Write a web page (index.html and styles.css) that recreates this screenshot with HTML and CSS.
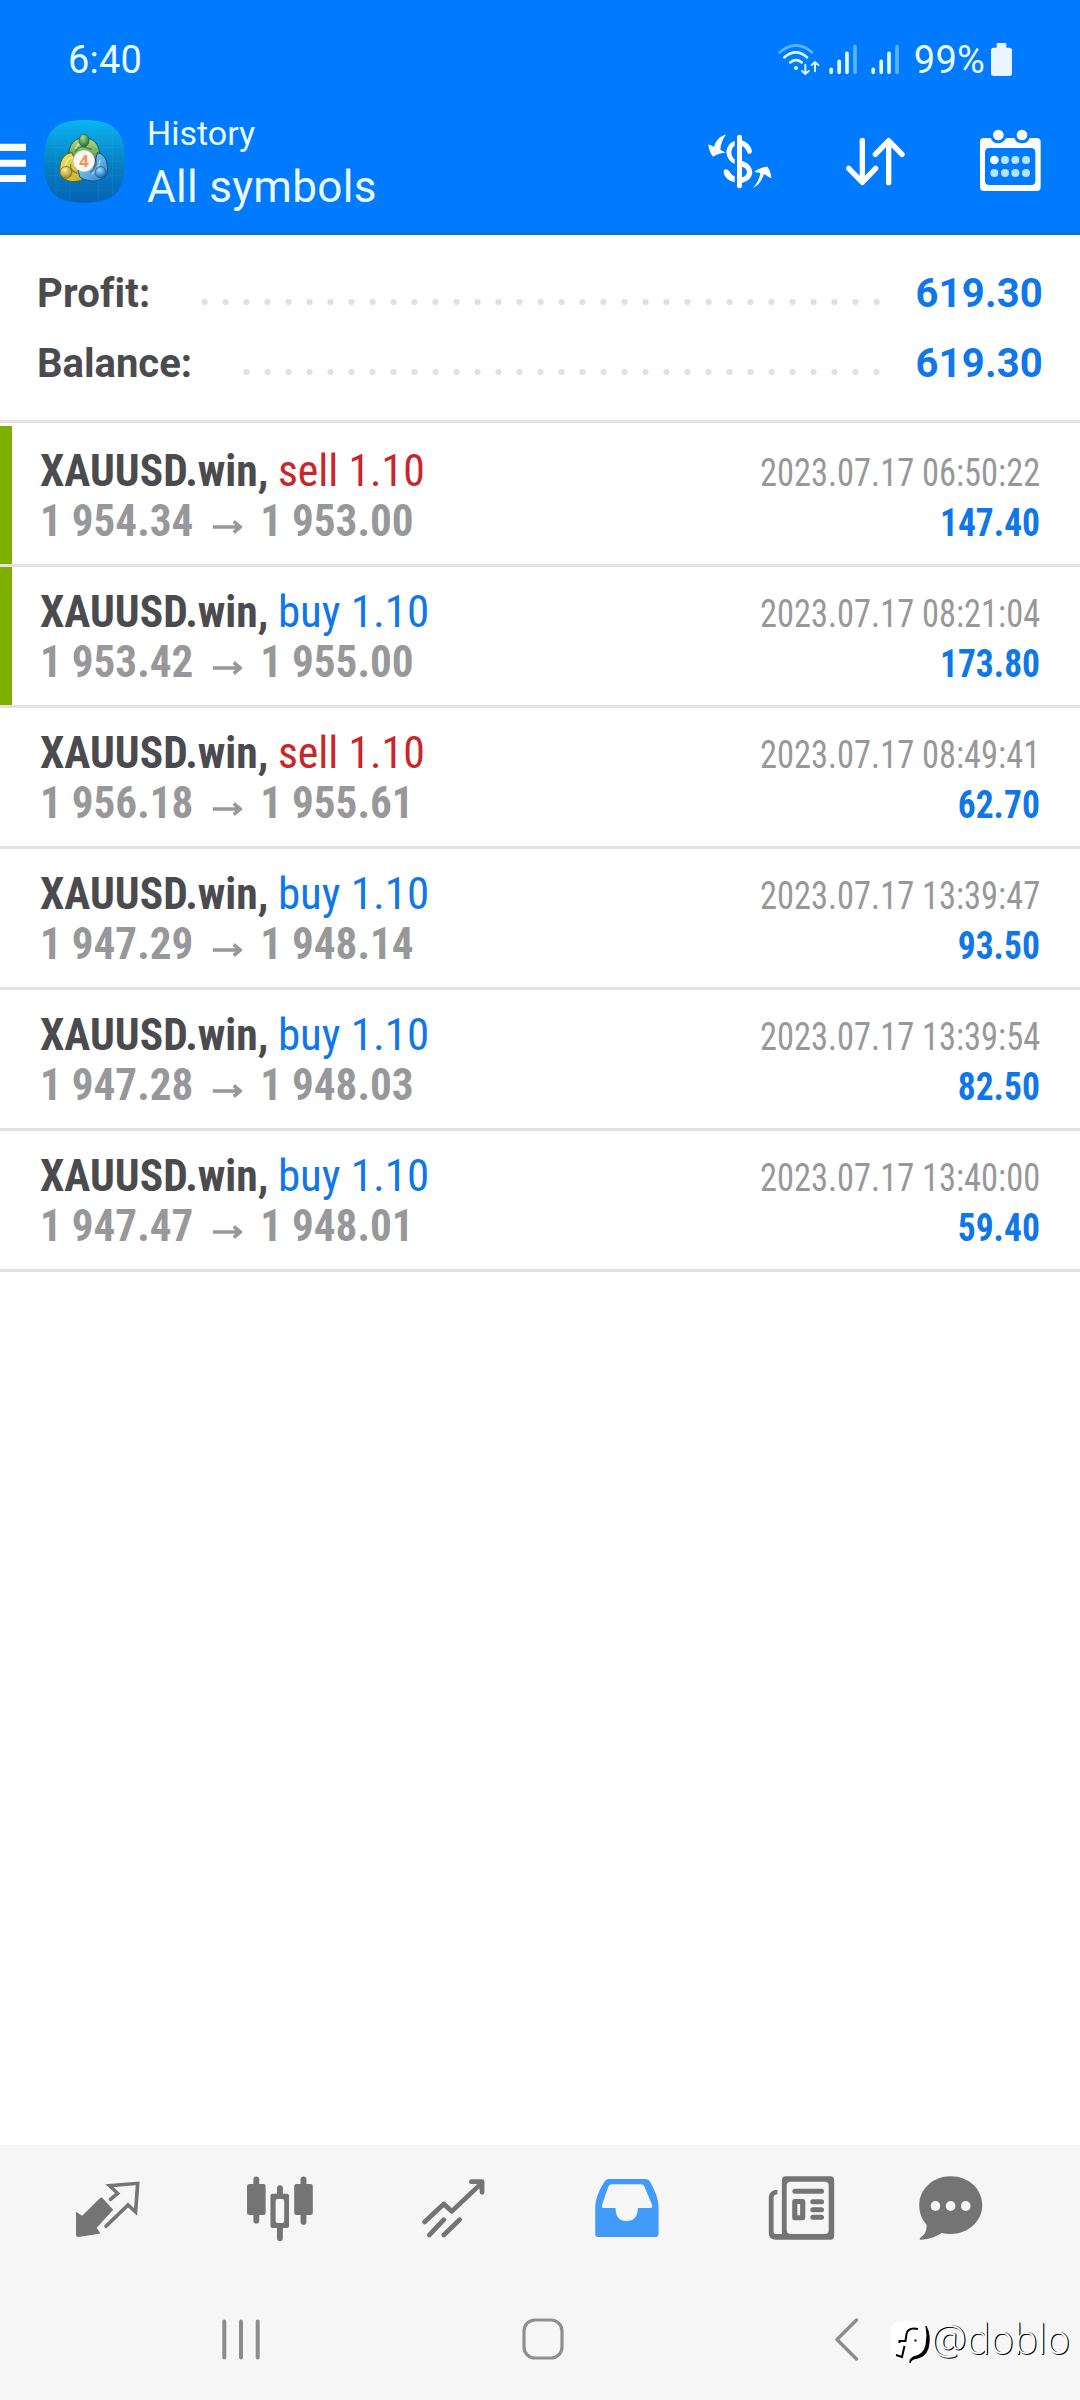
FILE: index.html
```html
<!DOCTYPE html>
<html lang="en">
<head>
<meta charset="utf-8">
<title>History</title>
<link rel="stylesheet" href="styles.css">
</head>
<body>
<div class="app">
  <header class="header">
    <div class="status">
      <span class="clock">6:40</span>
      <div class="indicators">
        <svg class="wifi" viewBox="348 126 132 105" fill="none" stroke="#d9f7ff" stroke-width="8" stroke-linecap="round">
          <path d="M356 157Q405 115 453 157" stroke="#5cb4ff"/>
          <path d="M370 172Q405 142 438 172"/>
          <path d="M388 187Q405 174 422 187"/>
          <circle cx="405" cy="204" r="6" fill="#d9f7ff" stroke="none"/>
          <path d="M433 194V222M423 213L433 222L443 213M462 214V186M452 195L462 186L472 195" stroke-width="6"/>
        </svg>
        <svg class="signal" viewBox="504 132 84 93" stroke="#e4fbff" stroke-width="11" stroke-linecap="round"><path d="M510.500 208V217M534.500 184V217M558 160V217"/><path d="M582 140V217" stroke="#5cb4ff"/></svg>
        <svg class="signal" viewBox="504 132 84 93" stroke="#e4fbff" stroke-width="11" stroke-linecap="round"><path d="M510.500 208V217M534.500 184V217M558 160V217"/><path d="M582 140V217" stroke="#5cb4ff"/></svg>
        <span class="percent">99%</span>
        <svg class="battery" viewBox="993 129 63 99" fill="#ebf5ff"><path d="M1012 129H1036Q1039 129 1039 132V143H1048Q1056 143 1056 151V220Q1056 228 1048 228H1001Q993 228 993 220V151Q993 143 1001 143H1010V132Q1010 129 1012 129Z"/></svg>
      </div>
    </div>
    <div class="toolbar">
      <svg class="menu" viewBox="0 429 78 120" fill="#fff"><path d="M0 431H78V453H0ZM0 479H78V500H0ZM0 525H78V546H0Z"/></svg>
      <svg class="logo" viewBox="132 360 243 249">
        <defs>
          <linearGradient id="tile" x1="0" y1="0" x2="0" y2="1"><stop offset="0" stop-color="#0bb4f4"/><stop offset=".5" stop-color="#0784c4"/><stop offset="1" stop-color="#0560b4"/></linearGradient>
          <linearGradient id="green" x1="0" y1="0" x2="0" y2="1"><stop offset="0" stop-color="#b4db8a"/><stop offset="1" stop-color="#3d8a3a"/></linearGradient>
          <linearGradient id="yellow" x1="0" y1="0" x2="1" y2="1"><stop offset="0" stop-color="#f3e660"/><stop offset="1" stop-color="#c4aa2a"/></linearGradient>
          <linearGradient id="blue" x1="0" y1="0" x2="1" y2="1"><stop offset="0" stop-color="#9bd6f8"/><stop offset="1" stop-color="#2b8ad6"/></linearGradient>
          <radialGradient id="headg" cx=".4" cy=".3" r=".7"><stop offset="0" stop-color="#a6dc92"/><stop offset="1" stop-color="#1f7332"/></radialGradient>
          <radialGradient id="heady" cx=".4" cy=".3" r=".7"><stop offset="0" stop-color="#f8f0a0"/><stop offset="1" stop-color="#a98a18"/></radialGradient>
          <radialGradient id="headb" cx=".4" cy=".3" r=".7"><stop offset="0" stop-color="#a4dcff"/><stop offset="1" stop-color="#0f66b4"/></radialGradient>
        </defs>
        <path d="M253 360C340 360 375 390 375 484S340 608 253 608S132 578 132 484S166 360 253 360Z" fill="url(#tile)"/>
        <path d="M168 380V590M210 362V606M296 362V606M338 380V590M140 442H367M132 484H375M140 527H367M160 570H346M160 400H346" stroke="#35b5e6" stroke-opacity=".35" stroke-width="1.500"/>
        <path d="M206 462C208 430 225 414 252 414S297 430 299 462L290 492H216Z" fill="url(#green)" stroke="#1f5a44" stroke-width="3"/>
        <path d="M216 458C180 462 178 500 180 522C194 548 228 550 250 538L232 500Z" fill="url(#yellow)" stroke="#5d5a20" stroke-width="3"/>
        <path d="M292 458C322 462 324 500 322 520C308 546 270 550 240 532L234 512L282 500Z" fill="url(#blue)" stroke="#174f86" stroke-width="3"/>
        <path d="M226 456Q234 440 252 440Q262 446 276 448M212 492Q208 512 232 520M284 470Q298 496 270 518" fill="none" stroke="#1c4a3c" stroke-opacity=".55" stroke-width="4"/>
        <path d="M196 498Q200 474 222 470M276 522Q296 510 300 480M226 446Q234 426 252 434" fill="none" stroke="#fff" stroke-opacity=".45" stroke-width="5"/>
        <ellipse cx="252" cy="421" rx="15" ry="19" fill="url(#headg)" stroke="#1b5a38" stroke-width="2"/>
        <circle cx="198" cy="517" r="18" fill="url(#heady)" stroke="#6d5c18" stroke-width="2"/>
        <circle cx="302" cy="517" r="17" fill="url(#headb)" stroke="#15518c" stroke-width="2"/>
        <circle cx="252" cy="483" r="32" fill="#fbf7f2" stroke="#d3cdc4" stroke-width="2"/>
        <text x="252" y="501" text-anchor="middle" class="logo-digit">4</text>
      </svg>
      <div class="titles">
        <span class="section">History</span>
        <span class="scope">All symbols</span>
      </div>
      <div class="actions">
        <svg class="act-money" viewBox="141 399 195 168" fill="none" stroke="#fff" stroke-linecap="round">
          <path d="M198 404C180 407 168 421 162 440L145 433C146 448 151 460 159 470C172 462 184 458 197 458L181 449C182 432 188 416 198 404Z" fill="#fff" stroke="none"/>
          <path d="M279 564C297 555 305 542 312 522C319 526 327 531 334 535C333 519 329 509 322 500C308 501 294 506 283 515C289 517 295 518 301 519C299 536 290 552 279 564Z" fill="#fff" stroke="none"/>
          <path d="M238.500 412V557" stroke-width="15"/>
          <path d="M224 422Q200 433 199 455Q201 482 224 492V478Q214 470 214 455Q216 442 224 438ZM246 421Q270 430 276 452Q274 464 264 461Q256 442 246 438ZM246 482Q276 492 277 519Q274 542 246 549V532Q261 528 261 515Q259 503 246 500ZM192 510Q200 504 208 514Q214 526 224 529V547Q196 540 191 519Z" fill="#fff" stroke="none"/>
        </svg>
        <svg class="act-sort" viewBox="555 399 180 168" fill="none" stroke="#fff" stroke-width="16" stroke-linecap="round" stroke-linejoin="round">
          <path d="M607 421V547M566 505L607 547L647 505M686 548V422M646 463L686 422L726 463"/>
        </svg>
        <svg class="act-cal" viewBox="957 387 189 189" fill="#fff">
          <path fill-rule="evenodd" d="M972 414H992Q998 430 1014 430T1038 414H1063Q1068 430 1086 430T1109 414H1130Q1142 414 1142 426V561Q1142 573 1130 573H972Q960 573 960 561V426Q960 414 972 414ZM988 444Q975 444 975 457V542Q975 555 988 555H1113Q1126 555 1126 542V457Q1126 444 1113 444Z"/>
          <circle cx="1015" cy="405" r="16"/><circle cx="1086" cy="405" r="16"/>
          <circle cx="1003" cy="480" r="13"/>
          <g fill="#b8e2ff"><circle cx="1035" cy="480" r="12"/><circle cx="1066" cy="480" r="12"/><circle cx="1098" cy="480" r="12"/><circle cx="1003" cy="519" r="12"/><circle cx="1035" cy="519" r="12"/><circle cx="1066" cy="519" r="12"/><circle cx="1098" cy="519" r="12"/></g>
        </svg>
      </div>
    </div>
  </header>

  <section class="summary">
    <div class="total"><span class="label label-profit">Profit:</span><i class="dots dots-profit"></i><span class="amount">619.30</span></div>
    <div class="total"><span class="label">Balance:</span><i class="dots dots-balance"></i><span class="amount">619.30</span></div>
  </section>

  <main class="deals">
    <article class="deal marked"><div class="line"><span class="what"><b>XAUUSD.win,</b> <span class="sell">sell 1.10</span></span><time>2023.07.17 06:50:22</time></div><div class="line"><span class="price">1 954.34 <svg class="arrow" viewBox="0 0 31 14"><path d="M0 7H29M22 1.500L29 7L22 12.500"/></svg> 1 953.00</span><span class="gain">147.40</span></div></article>
    <article class="deal marked"><div class="line"><span class="what"><b>XAUUSD.win,</b> <span class="buy">buy 1.10</span></span><time>2023.07.17 08:21:04</time></div><div class="line"><span class="price">1 953.42 <svg class="arrow" viewBox="0 0 31 14"><path d="M0 7H29M22 1.500L29 7L22 12.500"/></svg> 1 955.00</span><span class="gain">173.80</span></div></article>
    <article class="deal"><div class="line"><span class="what"><b>XAUUSD.win,</b> <span class="sell">sell 1.10</span></span><time>2023.07.17 08:49:41</time></div><div class="line"><span class="price">1 956.18 <svg class="arrow" viewBox="0 0 31 14"><path d="M0 7H29M22 1.500L29 7L22 12.500"/></svg> 1 955.61</span><span class="gain">62.70</span></div></article>
    <article class="deal"><div class="line"><span class="what"><b>XAUUSD.win,</b> <span class="buy">buy 1.10</span></span><time>2023.07.17 13:39:47</time></div><div class="line"><span class="price">1 947.29 <svg class="arrow" viewBox="0 0 31 14"><path d="M0 7H29M22 1.500L29 7L22 12.500"/></svg> 1 948.14</span><span class="gain">93.50</span></div></article>
    <article class="deal"><div class="line"><span class="what"><b>XAUUSD.win,</b> <span class="buy">buy 1.10</span></span><time>2023.07.17 13:39:54</time></div><div class="line"><span class="price">1 947.28 <svg class="arrow" viewBox="0 0 31 14"><path d="M0 7H29M22 1.500L29 7L22 12.500"/></svg> 1 948.03</span><span class="gain">82.50</span></div></article>
    <article class="deal"><div class="line"><span class="what"><b>XAUUSD.win,</b> <span class="buy">buy 1.10</span></span><time>2023.07.17 13:40:00</time></div><div class="line"><span class="price">1 947.47 <svg class="arrow" viewBox="0 0 31 14"><path d="M0 7H29M22 1.500L29 7L22 12.500"/></svg> 1 948.01</span><span class="gain">59.40</span></div></article>
  </main>

  <nav class="tabs">
    <svg viewBox="206.400 126 209.100 216" preserveAspectRatio="none">
      <path d="M297 203L329 239L281 293L291 309L289 311L228 321Q221 321 221 315V245L239 257L291 204Q294 201 297 203Z"/>
      <path d="M321 208L342 190L318 167L400 160L394 246L372 225L308 289" fill="none" stroke="#747474" stroke-width="10.500" stroke-linecap="round"/>
    </svg>
    <svg viewBox="709.200 126 209.100 216" preserveAspectRatio="none">
      <path d="M725 162H766Q772 162 772 168V249Q772 255 766 255H725Q718 255 718 249V168Q718 162 725 162ZM862 162H903Q909 162 909 168V249Q909 255 903 255H862Q855 255 855 249V168Q855 162 862 162Z"/>
      <path fill-rule="evenodd" d="M792 191H834Q840 191 840 197V288Q840 294 834 294H792Q786 294 786 288V197Q786 191 792 191ZM807 207Q801 207 801 214V272Q801 279 807 279H820Q826 279 826 272V214Q826 207 820 207Z"/>
      <path d="M745 148V272M882 148V276M813.500 174V192M813.500 292V325" fill="none" stroke="#747474" stroke-width="17" stroke-linecap="round"/>
    </svg>
    <svg viewBox="1213 126 209.100 216" preserveAspectRatio="none">
      <path d="M1232 276L1288 222L1311 244L1397 160M1368 155H1399V187M1246 315L1288 269M1288 315L1334 269" fill="none" stroke="#747474" stroke-width="14" stroke-linecap="round" stroke-linejoin="round"/>
    </svg>
    <svg class="active" viewBox="148.800 126 209.100 216" preserveAspectRatio="none">
      <path fill-rule="evenodd" d="M200 147H308Q316 147 321 156Q345 200 345 230V311Q345 321 335 321H171Q161 321 161 311V230Q161 200 187 156Q192 147 200 147ZM210 163Q202 163 199 170L181 224Q178 234 187 234H220Q220 273 252 273T285 234H319Q329 234 326 224L304 170Q301 163 293 163Z"/>
    </svg>
    <svg viewBox="654 126 209.100 216" preserveAspectRatio="none">
      <path fill-rule="evenodd" d="M715 139H843Q855 139 855 151V317Q855 329 843 329H685Q665 329 665 309V200Q667 180 690 179V193Q680 194 679 202V306Q679 312 685 312H703V151Q703 139 715 139ZM729 155Q717 155 717 166V301Q717 312 729 312H828Q839 312 839 301V166Q839 155 828 155Z"/>
      <path fill-rule="evenodd" d="M740 207H764Q771 207 771 214V264Q771 271 764 271H740Q733 271 733 264V214Q733 207 740 207ZM748 222V256H756V222Z"/>
      <path d="M741 184H818M793 215H818M793 239H818M793 262H818" stroke="#747474" stroke-width="15" stroke-linecap="round"/>
    </svg>
    <svg class="chat" viewBox="1086.700 126 209.100 216" preserveAspectRatio="none">
      <path d="M1193 139C1245 139 1285 177 1285 225C1285 275 1243 312 1193 312Q1178 312 1167 309C1145 323 1125 329 1106 329Q1101 328 1105 323C1118 314 1124 302 1123 284C1109 268 1102 249 1102 226C1102 177 1142 139 1193 139Z"/>
      <g fill="#f6f6f6"><ellipse cx="1149" cy="228" rx="14" ry="15"/><ellipse cx="1193" cy="228" rx="14" ry="15"/><ellipse cx="1237" cy="228" rx="14" ry="15"/></g>
    </svg>
  </nav>

  <footer class="system">
    <svg class="recents" viewBox="0 0 38 41" stroke="#8c8c8c" stroke-width="4" stroke-linecap="round"><path d="M2.300 2.500V38.500M19 2.500V38.500M35.700 2.500V38.500"/></svg>
    <svg class="home" viewBox="0 0 42 42" fill="none" stroke="#8f8f8f" stroke-width="3.200"><rect x="2" y="2" width="38" height="38" rx="11"/></svg>
    <svg class="back" viewBox="0 0 24 43" fill="none" stroke="#8c8c8c" stroke-width="3.400" stroke-linecap="round" stroke-linejoin="round"><path d="M21.500 2L2 21.500L21.500 41"/></svg>
    <div class="watermark">
      <svg viewBox="0 0 40 45">
        <rect x="0" y="0" width="37" height="38" rx="9" fill="#fff"/>
        <path d="M35 5Q39 12 38 22Q37 35 27 37Q20 38 19 42Q18 38 22 36Q33 34 35 24Q37 14 35 5Z" stroke="#000" stroke-width="1"/>
        <path d="M27 8Q17 6 15.500 13L14.500 20H8.500V22M13.500 25L11 36L5 34M23.500 19.500H25.500" fill="none" stroke="#000" stroke-width="2"/>
      </svg>
      <span>@doblo</span>
    </div>
  </footer>
</div>
</body>
</html>
```
FILE: styles.css
```css
* { box-sizing: border-box; }
body { margin: 0; background: #fff; font-family: Roboto, "Liberation Sans", sans-serif; }
svg { display: block; flex: none; }
.app { width: 1080px; height: 2400px; display: flex; flex-direction: column; overflow: hidden; }

.header { height: 235px; background: #007aff; color: #e9fbff; border-bottom: 2px solid #1a6fc4; flex: none; }
.status { height: 88px; padding: 31px 68px 0 68px; display: flex; justify-content: space-between; }
.clock, .percent { font-size: 38px; line-height: 58px; letter-spacing: 0.2px; }
.indicators { display: flex; align-items: flex-start; }
.wifi { width: 44px; height: 35px; margin-top: 11px; }
.signal { width: 28px; height: 31px; margin: 13px 0 0 8px; }
.signal + .signal { margin-left: 14px; }
.percent { margin-left: 15px; }
.battery { width: 21px; height: 33px; margin: 12px 0 0 6px; }

.toolbar { height: 145px; display: flex; align-items: flex-start; padding-right: 38px; }
.menu { width: 26px; height: 40px; margin-top: 55px; }
.logo { width: 81px; height: 83px; margin: 32px 0 0 18px; }
.logo-digit { font: 700 50px "Open Sans", sans-serif; fill: #ee9456; }
.titles { display: flex; flex-direction: column; margin: 23px 0 0 22px; }
.section { font-size: 34px; line-height: 44px; }
.scope { font-size: 44px; line-height: 64px; letter-spacing: 0.3px; }
.actions { display: flex; align-items: flex-start; margin-left: auto; }
.act-money { width: 65px; height: 56px; margin-top: 45px; }
.act-sort { width: 60px; height: 56px; margin: 45px 0 0 73px; }
.act-cal { width: 63px; height: 63px; margin: 41px 0 0 74px; }

.summary { height: 188px; padding: 23px 37px 0; border-bottom: 3px solid #e3e3e3; flex: none; }
.total { height: 70px; display: flex; align-items: center; justify-content: space-between; font-size: 40px; font-weight: 700; }
.label { color: #4b4b4f; }
.label-profit { letter-spacing: 0.2px; }
.amount { color: #1077e8; letter-spacing: 0.2px; }
.dots { height: 8px; margin: 18px 28px 0 auto; background: radial-gradient(circle, #e1e1e1 2.800px, transparent 3.600px) 0 0 / 21px 8px repeat-x; }
.dots-profit { width: 693px; }
.dots-balance { width: 651px; }

.deals { flex: 1; font-family: "Roboto Condensed", Roboto, sans-serif; font-stretch: 75%; }
.deal { height: 141px; padding: 20px 40px 0; border-bottom: 3px solid #e3e3e3; position: relative; }
.deal:first-child { height: 144px; padding-top: 23px; }
.marked::before { content: ""; position: absolute; left: 0; top: 0; width: 12px; height: 138px; background: #7fb000; }
.marked:first-child::before { top: 3px; }
.line { display: flex; justify-content: space-between; align-items: baseline; height: 50px; line-height: 50px; font-size: 45px; white-space: nowrap; }
.what { transform: scaleX(.967); transform-origin: left; }
.what b { color: #4b4b4f; }
.sell, .buy { display: inline-block; transform-origin: left; }
.sell { color: #c9252b; transform: scaleX(1.005); }
.buy { color: #1077e8; transform: scaleX(1.033); }
time { font-size: 38px; color: #98989a; transform: scaleX(.906); transform-origin: right; }
.price { font-weight: 700; color: #98989a; transform: scaleX(.959); transform-origin: left; }
.arrow { display: inline-block; width: 31px; height: 14px; margin: 0 8px 0 10px; vertical-align: 2px; fill: none; stroke: #98989a; stroke-width: 3.500px; }
.gain { font-size: 38px; font-weight: 700; color: #1077e8; transform: scaleX(.935); transform-origin: right; }

.tabs { height: 132px; background: #f6f6f6; display: grid; grid-template-columns: repeat(6, 173.500px); padding: 27px 0 0 20px; justify-items: center; fill: #747474; flex: none; }
.tabs svg { width: 72px; height: 72px; }
.tabs .active { fill: #429bfb; }
.tabs .chat { margin-right: 48px; }

.system { height: 123px; background: #f6f6f6; display: flex; align-items: flex-start; padding: 41px 0 0 222px; position: relative; flex: none; }
.recents { width: 38px; height: 41px; margin-top: 1px; }
.home { width: 42px; height: 42px; margin-left: 262px; }
.back { width: 24px; height: 43px; margin-left: 271px; }
.watermark { position: absolute; left: 891px; top: 44px; display: flex; }
.watermark svg { width: 40px; height: 45px; }
.watermark span { margin: -7px 0 0 0; font: 300 40px/50px "Open Sans", "Noto Sans", sans-serif; color: #fff; text-shadow: 1px 1px 0 #000, 1px 0 0 #111; }
```
